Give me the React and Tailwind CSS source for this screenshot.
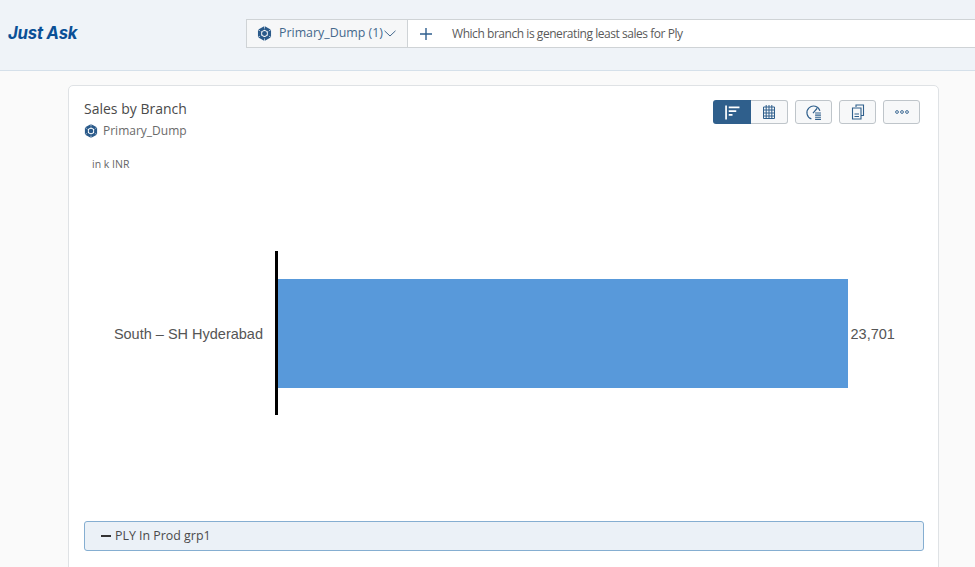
const font72 = "font-['Open_Sans',sans-serif]"

const CubeIcon = ({ className = '' }) => (
  <svg viewBox="0 0 14 14" className={className}>
    <path fill="none" stroke="#2a5a8a" strokeWidth="3" strokeLinejoin="round" d="M7 1.7 11.6 4.3V9.7L7 12.3 2.4 9.7V4.3Z" />
    <circle cx="7" cy="7" r="2.3" fill="#2a5a8a" />
    <path stroke="#fff" strokeWidth="0.6" d="M7 0V2.4M7 11.6V14M0.6 3.2 2.8 4.5M13.4 3.2 11.2 4.5M0.6 10.8 2.8 9.5M13.4 10.8 11.2 9.5" />
  </svg>
)

const ToolButton = ({ children, className = '' }) => (
  <div className={`h-6 w-[37px] flex items-center justify-center border border-[#bfc5ca] bg-[#f7f8f9] rounded-[3px] ${className}`}>
    {children}
  </div>
)

const App = () => {
  return (
    <div className={`h-[567px] w-[975px] overflow-hidden bg-[#fafafa] ${font72}`}>
      {/* Header */}
      <div className="h-[71px] flex items-center bg-[#eff3f8] border-b border-[#d5e0ea] pb-[3px]">
        <div className="w-[246px] pl-2 text-[16.7px] font-bold italic text-[#0a4f96] font-['Inter',sans-serif] tracking-[-0.2px]">Just Ask</div>
        <div className="flex-1 h-[29px] flex items-stretch bg-white border-y border-[#cfd3d6]">
          <div className="w-[162px] flex items-center bg-[#f6f7f8] border-x border-[#cfd3d6] pl-[10px] shrink-0">
            <CubeIcon className="w-[15px] h-[15px]" />
            <span className="ml-[7px] text-[12.4px] text-[#44688c]">Primary_Dump (1)</span>
            <svg viewBox="0 0 12 7" className="w-3 h-[7px] ml-[1px]"><path d="M0.5 0.8 6 6 11.5 0.8" fill="none" stroke="#44688c" strokeWidth="1" /></svg>
          </div>
          <div className="flex items-center pl-[12px]">
            <svg viewBox="0 0 12 12" className="w-3 h-3"><path d="M6 0V12M0 6H12" stroke="#2f5f8f" strokeWidth="1.4" /></svg>
            <span className="ml-5 text-[12px] tracking-[-0.45px] text-[#5a5a5a]">Which branch is generating least sales for Ply</span>
          </div>
        </div>
      </div>

      {/* Card */}
      <div className="ml-[68px] mt-[14px] w-[871px] h-[520px] bg-white border border-[#dfe2e5] rounded-[5px] px-[15px] pt-[13px] flex flex-col">
        <div className="flex justify-between items-start">
          <div>
            <div className="text-[14px] leading-[19px] text-[#4a4a4a]">Sales by Branch</div>
            <div className="mt-1 flex items-center">
              <CubeIcon className="w-[14px] h-[14px]" />
              <span className="ml-[5px] text-[12px] leading-[18px] text-[#6a6a6a]">Primary_Dump</span>
            </div>
          </div>
          <div className="flex items-center mr-[3px] mt-[1px]">
            {/* Chart / table toggle */}
            <div className="h-6 w-[38px] flex items-center justify-center bg-[#2f5f8c] rounded-l-[3px]">
              <svg viewBox="0 0 14 14" className="w-[15px] h-[15px]"><path d="M1 0.5V13.5M3.5 2.2H13.5M3.5 5.7H10.5M3.5 9.2H7" stroke="#fff" strokeWidth="1.6" fill="none" /></svg>
            </div>
            <div className="h-6 w-[37px] flex items-center justify-center border border-l-0 border-[#bfc5ca] bg-[#f7f8f9] rounded-r-[3px]">
              <svg viewBox="0 0 14 16" className="w-[14px] h-4"><path d="M1.5 3H12.5V14.5H1.5ZM1.5 6H12.5M1.5 9H12.5M1.5 12H12.5M4.2 1V14.5M7 1V14.5M9.8 1V14.5" stroke="#2f5f8c" strokeWidth="1" fill="none" /></svg>
            </div>
            <ToolButton className="ml-[7px]">
              <svg viewBox="0 0 16 16" className="w-[17px] h-[17px]">
                <path d="M6 14A6.2 6.2 0 1 1 14 6.5M7.5 8.5 11.5 4" stroke="#2f5f8c" strokeWidth="1.1" fill="none" />
                <path d="M9.5 8.5H15M9.5 10.5H15M9.5 12.5H15M9.5 14.5H15" stroke="#2f5f8c" strokeWidth="1.1" />
              </svg>
            </ToolButton>
            <ToolButton className="ml-[7px]">
              <svg viewBox="0 0 14 16" className="w-[14px] h-4"><path d="M5 3V1H12.5V11.5H10M1.5 4H10V15H1.5ZM3.5 10H8M3.5 12.5H8" stroke="#2f5f8c" strokeWidth="1.1" fill="none" /></svg>
            </ToolButton>
            <ToolButton className="ml-[7px]">
              <svg viewBox="0 0 14 4" className="w-[14px] h-1"><g fill="none" stroke="#2f5f8c" strokeWidth="0.9"><circle cx="2" cy="2" r="1.4" /><circle cx="7" cy="2" r="1.4" /><circle cx="12" cy="2" r="1.4" /></g></svg>
            </ToolButton>
          </div>
        </div>

        <div className="mt-[17px] ml-2 text-[10.5px] leading-[14px] text-[#666]">in k INR</div>

        {/* Chart */}
        <div className="mt-[80px] flex items-center h-[164px] font-['Liberation_Sans',sans-serif] text-[14.5px] text-[#555]">
          <div className="w-[179px] pt-[3px] text-right shrink-0">South – SH Hyderabad</div>
          <div className="ml-3 w-[2.5px] h-full bg-black shrink-0" />
          <div className="w-[570px] h-[109px] bg-[#5899da] shrink-0" />
          <div className="ml-[3px] pt-[3px]">23,701</div>
        </div>

        {/* Legend */}
        <div className="mt-[106px] w-[840px] h-[30px] flex items-center pl-[16px] bg-[#ebf1f7] border border-[#85aed1] rounded-[3px] text-[12.4px] text-[#4a4a4a]">
          <span className="w-[10px] h-[2px] bg-[#333] mr-1" />
          PLY In Prod grp1
        </div>
      </div>
    </div>
  )
}

export default App
